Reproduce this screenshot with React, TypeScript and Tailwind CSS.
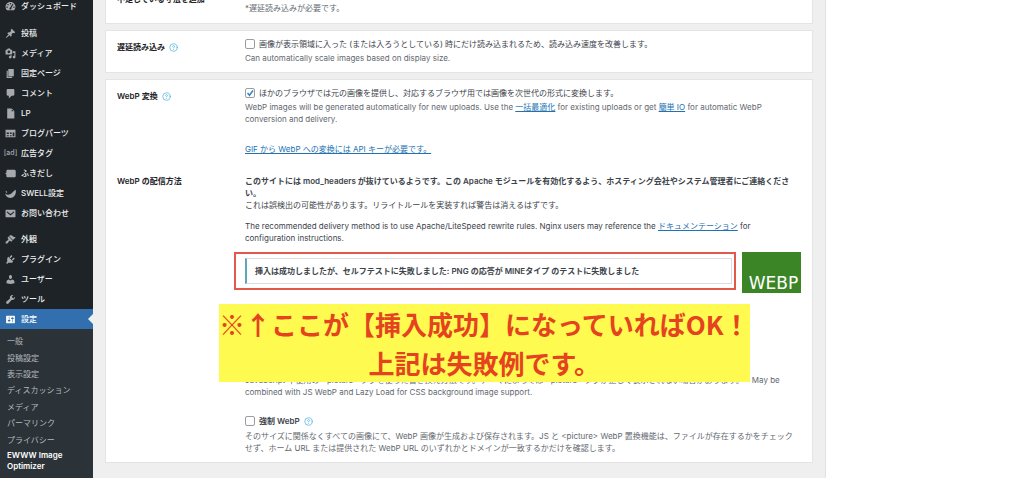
import React from 'react';
import { CircleHelp } from 'lucide-react';

const ICONS = {
  dashboard:
    'M3.76 17h12.48C17.34 15.6 19 13.9 19 11c0-5-4-9-9-9s-9 4-9 9c0 2.9 1.66 4.6 2.76 6zM10 3.600a1.300 1.300 0 1 1 0 2.600 1.300 1.300 0 0 1 0-2.600zM5.500 5.500a1.300 1.300 0 1 1 0 2.600 1.300 1.300 0 0 1 0-2.600zM14 5l1.500 1-4 6.500c.7 1.700-.3 2.900-1.500 2.900s-2.200-1.200-1.800-2.400c.2-.7.700-1.200 1.300-1.400zM3.700 10a1.300 1.300 0 1 1 0 2.600 1.300 1.300 0 0 1 0-2.600zM16.300 10a1.300 1.300 0 1 1 0 2.600 1.300 1.300 0 0 1 0-2.600z',
  post: 'M10.44 3.02l1.82-1.82 6.36 6.35-1.83 1.82c-1.05-.68-2.48-.57-3.41.36l-.75.75c-.92.93-1.04 2.35-.35 3.41l-1.83 1.82-2.41-2.41-2.8 2.79c-.42.42-3.38 2.71-3.8 2.29s1.86-3.39 2.28-3.81l2.79-2.79L4.1 9.36l1.83-1.82c1.05.69 2.48.57 3.4-.36l.75-.75c.93-.92 1.05-2.35.36-3.41z',
  media:
    'M13 11V4c0-.55-.45-1-1-1h-1.67L9 1H5L3.67 3H2c-.55 0-1 .45-1 1v7c0 .55.45 1 1 1h10c.55 0 1-.45 1-1zM7 4.500c1.38 0 2.500 1.120 2.500 2.500S8.380 9.500 7 9.500 4.500 8.380 4.500 7 5.620 4.500 7 4.500zM14 6h5v10.500c0 1.380-1.120 2.500-2.500 2.500S14 17.880 14 16.500s1.120-2.500 2.500-2.500c.17 0 .34.02.5.05V9h-3V6zm-4 8.050V13h2v3.500c0 1.380-1.120 2.500-2.500 2.500S7 17.880 7 16.500 8.120 14 9.500 14c.17 0 .34.02.5.05z',
  page: 'M6 15V2h10v13H6zm-1 1h8v2H3V5h2v11z',
  comment:
    'M5 2h10c1.100 0 2 .9 2 2v8c0 1.100-.9 2-2 2h-3l-5 5v-5H5c-1.100 0-2-.9-2-2V4c0-1.100.9-2 2-2z',
  file: 'M12 1H4v18h13V6l-5-5zm0 5V2.500L15.500 6H12z',
  blocks:
    'M1 3h18v14H1V3zm2 5v3h4V8H3zm6 0v3h3V8H9zm5 0v7h3V8h-3zM3 13v2h4v-2H3zm6 0v2h3v-2H9z',
  balloon: 'M5 3h12c1.500 0 2.500 1 2.500 2.500v9c0 1.500-1 2.500-2.500 2.500H5c-1.500 0-2.500-1-2.500-2.500v-3L0 10l2.500-1.500v-3C2.500 4 3.500 3 5 3z',
  swell:
    'M19.500 3c1.500 8-2.500 15-10 15C4.500 18 1.500 14.500 0 10c3 2.500 7 3 10 1 3.500-1.500 5-6 9.500-8zM1 5l2.500 1.500L4 9 2 8z',
  mail: 'M2 3h16c.6 0 1 .4 1 1v12c0 .6-.4 1-1 1H2c-.6 0-1-.4-1-1V4c0-.6.4-1 1-1zm1.500 3v2l6.500 5.500L16.500 8V6L10 11z',
  appearance:
    'M14.48 11.06L7.41 3.99l1.5-1.5c.5-.56 2.3-.47 3.51.32 1.21.8 1.43 1.28 2.91 2.1 1.18.64 2.45 1.26 4.45.85zm-.71.71L6.7 4.7 4.93 6.47c-.39.39-.39 1.02 0 1.41l1.06 1.06c.39.39.39 1.03 0 1.42-.6.6-1.43 1.11-2.21 1.69-.35.26-.7.53-1.01.84C1.43 14.23.4 16.08 1.4 17.07c.99 1 2.84-.03 4.18-1.36.31-.31.58-.66.85-1.02.57-.78 1.08-1.61 1.69-2.21.39-.39 1.02-.39 1.41 0l1.06 1.06c.39.39 1.02.39 1.41 0z',
  plugin:
    'M13.11 4.36L9.87 7.6 8 5.73l3.24-3.24c.35-.34 1.05-.2 1.56.32.52.51.66 1.21.31 1.55zm-8 1.77l.91-1.12 9.01 9.01-1.19.84c-.71.71-2.63 1.16-3.82 1.16H6.14L4.9 17.26c-.59.59-1.54.59-2.12 0-.59-.58-.59-1.53 0-2.12l1.24-1.24v-3.88c0-1.13.4-3.19 1.09-3.89zm7.26 3.97l3.24-3.24c.34-.35 1.04-.21 1.55.31.52.51.66 1.21.31 1.55l-3.24 3.25z',
  user: 'M10 9.25c-2.27 0-2.73-3.44-2.73-3.44C7 4.02 7.82 2 9.97 2c2.16 0 2.98 2.02 2.71 3.81 0 0-.41 3.44-2.68 3.44zm0 2.57L12.72 10c2.39 0 4.52 2.33 4.52 4.53v2.49s-3.65 1.13-7.24 1.13c-3.65 0-7.24-1.13-7.24-1.13v-2.49c0-2.25 1.94-4.48 4.47-4.48z',
  tools:
    'M16.68 9.77c-1.34 1.34-3.3 1.67-4.95.99l-5.41 6.52c-.99.99-2.59.99-3.58 0s-.99-2.59 0-3.57l6.52-5.42c-.68-1.65-.35-3.61.99-4.95 1.28-1.28 3.12-1.62 4.72-1.06l-2.89 2.89 2.82 2.82 2.86-2.87c.53 1.58.18 3.39-1.08 4.65z',
  settings:
    'M18 16V4c0-.55-.45-1-1-1H3c-.55 0-1 .45-1 1v12c0 .55.45 1 1 1h14c.55 0 1-.45 1-1zM8 11h1c.55 0 1 .45 1 1s-.45 1-1 1H8v1.5c0 .28-.22.5-.5.5s-.5-.22-.5-.5V13H6c-.55 0-1-.45-1-1s.45-1 1-1h1V5.5c0-.28.22-.5.5-.5s.5.22.5.5V11zm5-2h-1c-.55 0-1-.45-1-1s.45-1 1-1h1V5.5c0-.28.22-.5.5-.5s.5.22.5.5V7h1c.55 0 1 .45 1 1s-.45 1-1 1h-1v5.5c0 .28-.22.5-.5.5s-.5-.22-.5-.5V9z',
};

type IconName = keyof typeof ICONS;

const contentMenu: { label: string; icon?: IconName }[] = [
  { label: '投稿', icon: 'post' },
  { label: 'メディア', icon: 'media' },
  { label: '固定ページ', icon: 'page' },
  { label: 'コメント', icon: 'comment' },
  { label: 'LP', icon: 'file' },
  { label: 'ブログパーツ', icon: 'blocks' },
  { label: '広告タグ' },
  { label: 'ふきだし', icon: 'balloon' },
  { label: 'SWELL設定', icon: 'swell' },
  { label: 'お問い合わせ', icon: 'mail' },
];

const adminMenu: { label: string; icon: IconName }[] = [
  { label: '外観', icon: 'appearance' },
  { label: 'プラグイン', icon: 'plugin' },
  { label: 'ユーザー', icon: 'user' },
  { label: 'ツール', icon: 'tools' },
  { label: '設定', icon: 'settings' },
];

const settingsMenu = ['一般', '投稿設定', '表示設定', 'ディスカッション', 'メディア', 'パーマリンク', 'プライバシー'];

function MenuItem({ label, icon, active }: { label: string; icon?: IconName; active?: boolean }) {
  return (
    <a
      href="#"
      className={`relative flex h-5 items-center gap-1 pl-1 text-[8px] font-medium ${active ? 'bg-[#326fae] text-white' : 'text-[#f0f0f1]'}`}
    >
      <span className={`flex w-[13px] shrink-0 justify-center ${active ? 'text-white' : 'text-[#a7aaad]'}`}>
        {icon ? (
          <svg viewBox="0 0 20 20" className="size-[11px]" fill="currentColor" fillRule="evenodd" aria-hidden="true">
            <path d={ICONS[icon]} />
          </svg>
        ) : (
          <span className="text-[7px]">[ad]</span>
        )}
      </span>
      <span className="whitespace-nowrap">{label}</span>
      {active && (
        <span className="absolute right-0 top-1/2 size-0 -translate-y-1/2 border-y-[5px] border-r-[5px] border-y-transparent border-r-[#efefef]" />
      )}
    </a>
  );
}

function Sidebar() {
  return (
    <nav className="w-[93px] shrink-0 bg-[#1d2327]">
      <div className="-mt-1">
        <MenuItem label="ダッシュボード" icon="dashboard" />
      </div>
      <div className="mt-[7px]">
        {contentMenu.map((item) => (
          <MenuItem key={item.label} {...item} />
        ))}
      </div>
      <div className="mt-[6px]">
        {adminMenu.map((item) => (
          <MenuItem key={item.label} {...item} active={item.label === '設定'} />
        ))}
      </div>
      <div className="bg-[#2c3338] pb-4 pl-[7px] pt-1 text-[8px] text-[#b4b9be]">
        <ul className="grid h-[115px] auto-rows-fr">
          {settingsMenu.map((label) => (
            <li key={label} className="flex items-center">
              <a href="#">{label}</a>
            </li>
          ))}
        </ul>
        <a href="#" className="block pt-0.5 font-semibold leading-[11px] text-white">
          EWWW Image
          <br />
          Optimizer
        </a>
      </div>
    </nav>
  );
}

function Help() {
  return (
    <button type="button" aria-label="ヘルプ" className="text-[#4fb3dc]">
      <CircleHelp size={9} strokeWidth={2} />
    </button>
  );
}

const cardClass = 'border border-[#e4e4e6] bg-white px-[11px]';
const labelClass = 'flex w-32 shrink-0 items-center gap-1 self-start font-semibold text-[#1d2327]';
const linkClass = 'text-[#2271b1] underline';

function Checkbox({ id, defaultChecked }: { id: string; defaultChecked?: boolean }) {
  return (
    <span className="relative flex size-[10px] shrink-0">
      <input
        id={id}
        type="checkbox"
        defaultChecked={defaultChecked}
        className="peer size-[10px] appearance-none rounded-[2px] border border-[#9a9da1] bg-white"
      />
      <svg
        viewBox="0 0 10 10"
        className="pointer-events-none absolute inset-0 hidden size-[10px] peer-checked:block"
        fill="none"
        stroke="#3582c4"
        strokeWidth="1.5"
      >
        <path d="M2.500 5l2 2.300L8 2.500" />
      </svg>
    </span>
  );
}

export default function App() {
  return (
    <div className="flex h-screen overflow-hidden bg-white font-['Inter','Noto_Sans_CJK_JP',sans-serif] text-[8px] leading-3 text-[#3c434a]">
      <Sidebar />

      <main className="min-w-0 flex-1 bg-[#efefef] px-3">
        <section className={`${cardClass} -mt-2 flex pb-[9px]`}>
          <div className={labelClass}>不足している寸法を追加</div>
          <p className="pt-[9px] text-[#646970]">*遅延読み込みが必要です。</p>
        </section>

        <section className={`${cardClass} mt-[6px] flex pb-2 pt-[7px]`}>
          <div className={`${labelClass} pt-[3px]`}>
            遅延読み込み <Help />
          </div>
          <div>
            <div className="flex items-center gap-1">
              <Checkbox id="lazy" />
              <label htmlFor="lazy">
                画像が表示領域に入った (または入ろうとしている) 時にだけ読み込まれるため、読み込み速度を改善します。
              </label>
            </div>
            <p className="mt-0.5 text-[#646970]">Can automatically scale images based on display size.</p>
          </div>
        </section>

        <section className={`${cardClass} mt-[6px] pb-2 pt-[7px]`}>
          <div className="flex">
            <div className={`${labelClass} pt-[3px]`}>
              WebP 変換 <Help />
            </div>
            <div className="min-w-0 flex-1">
              <div className="flex items-center gap-1">
                <Checkbox id="webp" defaultChecked />
                <label htmlFor="webp">
                  ほかのブラウザでは元の画像を提供し、対応するブラウザ用では画像を次世代の形式に変換します。
                </label>
              </div>
              <p className="mt-0.5 text-[#646970]">
                WebP images will be generated automatically for new uploads. Use the{' '}
                <a href="#" className={linkClass}>一括最適化</a> for existing uploads or get{' '}
                <a href="#" className={linkClass}>簡単 IO</a> for automatic WebP
                <br />
                conversion and delivery.
              </p>
              <p className="mt-[18px]">
                <a href="#" className={linkClass}>GIF から WebP への変換には API キーが必要です。</a>
              </p>
            </div>
          </div>

          <div className="mt-5 flex">
            <div className={labelClass}>WebP の配信方法</div>
            <div className="min-w-0 flex-1">
              <p className="font-semibold">
                このサイトには mod_headers が抜けているようです。この Apache モジュールを有効化するよう、ホスティング会社やシステム管理者にご連絡くださ
                <br />
                い。
              </p>
              <p>これは誤検出の可能性があります。リライトルールを実装すれば警告は消えるはずです。</p>
              <p className="mt-[9px]">
                The recommended delivery method is to use Apache/LiteSpeed rewrite rules. Nginx users may reference the{' '}
                <a href="#" className={linkClass}>ドキュメンテーション</a>
                {' '}for
                <br />
                configuration instructions.
              </p>

              <div className="relative mt-2 flex items-start gap-[6px]">
                <div className="-ml-[11px] w-[502px] border-2 border-[#e2594a] py-1 pl-[9px] pr-0.5">
                  <div className="border border-l-2 border-[#dcdcde] border-l-[#5ba7bd] px-2 py-[6px] font-semibold">
                    挿入は成功しましたが、セルフテストに失敗しました: PNG の応答が MINEタイプ のテストに失敗しました
                  </div>
                </div>
                <div className="flex h-[41px] w-[59px] items-end justify-center bg-[#3b8526] pb-0.5 pl-1 font-['DejaVu_Sans',sans-serif] text-[17px] leading-4 text-white">
                  WEBP
                </div>

                {/* Annotation over the settings */}
                <div className="absolute -left-[26px] top-[52px] z-10 bg-[#fffa50] text-center font-['Noto_Sans_CJK_JP',sans-serif] text-[26px] font-bold leading-[39px] text-[#e5431f] whitespace-nowrap">
                  ※↑ここが【挿入成功】になっていればOK！
                  <br />
                  上記は失敗例です。
                </div>
              </div>

              <p className="mt-[81px] whitespace-nowrap text-[#646970]">
                JavaScript 不使用の &lt;picture&gt; タグを使った書き換え方法です。テーマによっては &lt;picture&gt; タグが正しく表示されない場合があります。
                <span className="ml-2">May be</span>
                <br />
                combined with JS WebP and Lazy Load for CSS background image support.
              </p>

              <div className="mt-[17px] flex items-center gap-1">
                <Checkbox id="force-webp" />
                <label htmlFor="force-webp" className="font-semibold">強制 WebP</label>
                <Help />
              </div>
              <p className="mt-[3px] text-[#646970]">
                そのサイズに関係なくすべての画像にて、WebP 画像が生成および保存されます。JS と &lt;picture&gt; WebP 置換機能は、ファイルが存在するかをチェック
                <br />
                せず、ホーム URL または提供された WebP URL のいずれかとドメインが一致するかだけを確認します。
              </p>
            </div>
          </div>
        </section>
      </main>

      <div className="w-[199px] shrink-0 border-l border-[#e2e2e2] bg-white" />
    </div>
  );
}
